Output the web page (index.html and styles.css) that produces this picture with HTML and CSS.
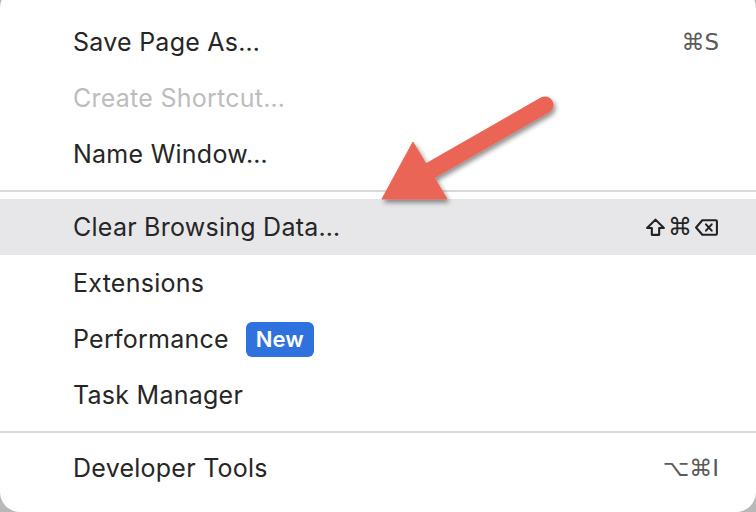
FILE: index.html
```html
<!DOCTYPE html>
<html>
<head>
<meta charset="utf-8">
<link rel="stylesheet" href="styles.css">
</head>
<body>
<div class="menu">
  <div class="item"><span class="label">Save Page As…</span><span class="key light">⌘S</span></div>
  <div class="item disabled"><span class="label">Create Shortcut…</span></div>
  <div class="item"><span class="label">Name Window…</span></div>
  <div class="sep"></div>
  <div class="item active"><span class="label">Clear Browsing Data…</span>
    <span class="key keys">
      <svg class="ico" width="21" height="21" viewBox="0 0 20 20"><path d="M10 2.5 L18 10.5 L13.5 10.5 L13.5 17 L6.5 17 L6.5 10.5 L2 10.5 Z" fill="none" stroke="#222" stroke-width="2" stroke-linejoin="round"/></svg><span class="cmd">⌘</span><svg class="ico" width="25" height="21" viewBox="0 0 24 20"><path d="M8 3 H21 Q22 3 22 4 V16 Q22 17 21 17 H8 L2 10 Z" fill="none" stroke="#222" stroke-width="2" stroke-linejoin="round"/><path d="M11.5 7 L17 13 M17 7 L11.5 13" stroke="#222" stroke-width="2" stroke-linecap="round"/></svg>
    </span>
  </div>
  <div class="item"><span class="label">Extensions</span></div>
  <div class="item"><span class="label">Performance</span><span class="badge">New</span></div>
  <div class="item"><span class="label">Task Manager</span></div>
  <div class="sep"></div>
  <div class="item"><span class="label">Developer Tools</span><span class="key light">⌥⌘I</span></div>
  <svg class="arrow" width="756" height="512" viewBox="0 0 756 512">
    <defs>
      <filter id="sh" x="-20%" y="-20%" width="140%" height="140%">
        <feGaussianBlur in="SourceAlpha" stdDeviation="2.5"/>
        <feOffset dx="2" dy="3" result="b"/>
        <feComponentTransfer><feFuncA type="linear" slope="0.45"/></feComponentTransfer>
        <feMerge><feMergeNode/><feMergeNode in="SourceGraphic"/></feMerge>
      </filter>
    </defs>
    <g filter="url(#sh)" fill="#ea6556" stroke="#ea6556">
      <line x1="545" y1="105" x2="428" y2="172" stroke-width="17" stroke-linecap="round"/>
      <polygon points="382,199 413,142 447,199" stroke-width="1" stroke-linejoin="round"/>
    </g>
  </svg>
</div>
</body>
</html>
```
FILE: styles.css
```css
html, body {
  margin: 0;
  padding: 0;
  width: 756px;
  height: 512px;
  overflow: hidden;
  background: #b8b8b8;
}
.menu {
  position: relative;
  margin-top: -12px;
  height: 524px;
  box-sizing: border-box;
  padding-top: 26px;
  background: #ffffff;
  border-radius: 20px;
  display: flex;
  flex-direction: column;
  font-family: Inter, "Noto Sans", "DejaVu Sans", sans-serif;
  font-size: 25px;
  color: #262626;
}
.item {
  height: 56px;
  display: flex;
  align-items: center;
  padding: 0 37px 0 73px;
}
.label {
  letter-spacing: 0.25px;
}
.item.active {
  background: #e7e7e9;
}
.item.disabled .label {
  color: #bdbdbd;
}
.key {
  margin-left: auto;
  font-family: "DejaVu Sans", sans-serif;
  font-size: 23px;
  color: #222;
}
.key.light {
  color: #5a5a5a;
}
.keys {
  display: flex;
  align-items: center;
  gap: 2px;
}
.cmd {
  font-size: 24px;
  line-height: 20px;
}
.ico {
  display: block;
}
.badge {
  margin-left: 17px;
  background: #2f72dd;
  color: #fff;
  font-weight: 600;
  font-size: 22px;
  line-height: 35px;
  height: 35px;
  padding: 0 10px;
  border-radius: 6px;
}
.sep {
  height: 17px;
  display: flex;
  align-items: center;
}
.sep::before {
  content: "";
  display: block;
  width: 100%;
  height: 2px;
  background: #d9d9d9;
}
.arrow {
  position: absolute;
  left: 0;
  top: 12px;
  pointer-events: none;
}
```
